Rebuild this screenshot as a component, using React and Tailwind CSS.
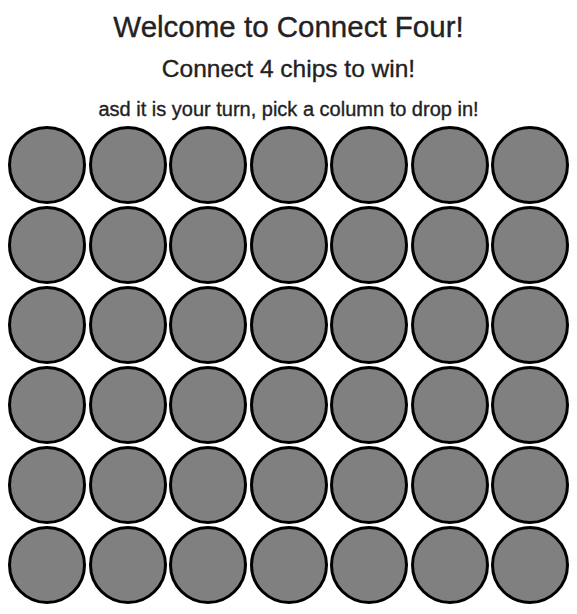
export default function App() {
  const rows = Array.from({ length: 6 });
  const cols = Array.from({ length: 7 });
  return (
    <div className="min-h-screen bg-white flex flex-col items-center pt-[10px] text-[#222] [-webkit-text-stroke:0.35px_#222]" style={{ fontFamily: '"Liberation Sans", Arial, sans-serif' }}>
      <h1 className="text-[29.5px] leading-[33px] h-[33px] whitespace-nowrap">Welcome to Connect Four!</h1>
      <h2 className="mt-[12px] text-[24.5px] leading-[28px] h-[28px] whitespace-nowrap">Connect 4 chips to win!</h2>
      <p className="mt-[15px] text-[20px] leading-[22px] h-[22px] whitespace-nowrap">asd it is your turn, pick a column to drop in!</p>
      <div className="mt-[6px] grid grid-cols-7 gap-x-[2.5px] gap-y-[2px]">
        {rows.map((_, r) =>
          cols.map((_, c) => (
            <div key={`${r}-${c}`} className="w-[78px] h-[78px] rounded-full bg-[#808080] border-[3px] border-black cursor-pointer" />
          ))
        )}
      </div>
    </div>
  );
}
